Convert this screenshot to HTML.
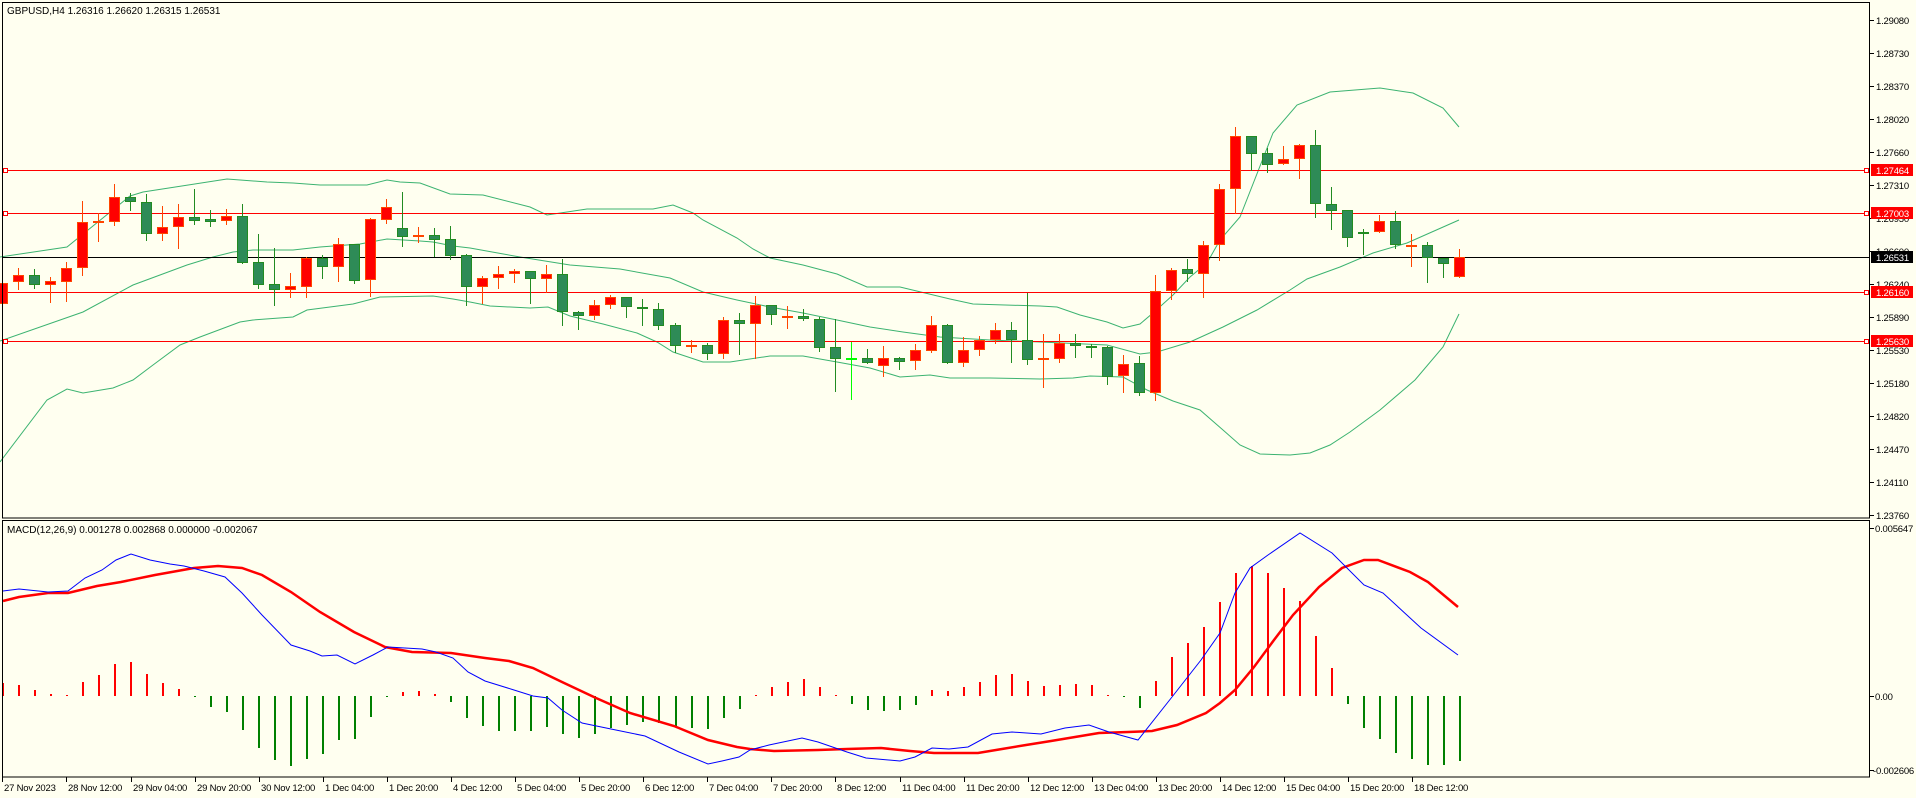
<!DOCTYPE html>
<html><head><meta charset="utf-8">
<style>
html,body{margin:0;padding:0;background:#fffff0;}
body{width:1916px;height:798px;overflow:hidden;position:relative;font-family:"Liberation Sans",sans-serif;}
svg{position:absolute;left:0;top:0;}
.t{font-family:"Liberation Sans",sans-serif;font-size:10px;fill:#000;}
.ax{font-family:"Liberation Sans",sans-serif;font-size:9.5px;fill:#000;letter-spacing:-0.2px;}
.lb{font-family:"Liberation Sans",sans-serif;font-size:9.5px;fill:#fff;letter-spacing:-0.2px;}
</style></head><body>
<svg id="s" width="1916" height="798" viewBox="0 0 1916 798" xmlns="http://www.w3.org/2000/svg" shape-rendering="crispEdges">
<rect x="0" y="0" width="1916" height="798" fill="#fffff0"/>
<g id="bands" fill="none" stroke="#3cb371" stroke-width="1" shape-rendering="auto"></g>
<g id="hl"></g>
<g id="candles"></g>
<g id="macd"></g>
<rect x="2.5" y="2.5" width="1867" height="515.5" fill="none" stroke="#000" stroke-width="1"/>
<rect x="2.5" y="520.5" width="1867" height="256.5" fill="none" stroke="#000" stroke-width="1"/>
<text class="t" x="7" y="14">GBPUSD,H4  1.26316 1.26620 1.26315 1.26531</text>
<text class="t" x="7" y="533">MACD(12,26,9) 0.001278 0.002868 0.000000 -0.002067</text>
<g id="axis"></g>
<g id="ytext">
<text class="ax" x="1876" y="24">1.29080</text>
<text class="ax" x="1876" y="57">1.28730</text>
<text class="ax" x="1876" y="90">1.28370</text>
<text class="ax" x="1876" y="123">1.28020</text>
<text class="ax" x="1876" y="156">1.27660</text>
<text class="ax" x="1876" y="189">1.27310</text>
<text class="ax" x="1876" y="222">1.26950</text>
<text class="ax" x="1876" y="255">1.26600</text>
<text class="ax" x="1876" y="288">1.26240</text>
<text class="ax" x="1876" y="321">1.25890</text>
<text class="ax" x="1876" y="354">1.25530</text>
<text class="ax" x="1876" y="387">1.25180</text>
<text class="ax" x="1876" y="420">1.24820</text>
<text class="ax" x="1876" y="453">1.24470</text>
<text class="ax" x="1876" y="486">1.24110</text>
<text class="ax" x="1876" y="519">1.23760</text>
<text class="ax" x="1875" y="532">0.005647</text>
<text class="ax" x="1875" y="700">0.00</text>
<text class="ax" x="1873" y="774">-0.002606</text>
</g>
<g id="lbls"></g>
<g id="dates"></g>
</svg>
<script>
var NS="http://www.w3.org/2000/svg";
function el(p,t,a,txt){var e=document.createElementNS(NS,t);for(var k in a)e.setAttribute(k,a[k]);if(txt!==undefined)e.textContent=txt;document.getElementById(p).appendChild(e);return e;}
function cx(i){return 1.67+16.02*i;}
var up=[[0,257],[67,247],[130,196],[143,192],[227,179],[267,182],[293,183],[320,185],[367,185],[387,180],[400,182],[420,183],[450,194],[483,195],[530,207],[547,215],[567,212],[587,209],[653,209],[673,205],[693,213],[703,220],[737,238],[753,249],[770,258],[803,265],[837,274],[867,287],[900,287],[950,299],[973,304],[1040,306],[1057,307],[1080,315],[1107,322],[1123,328],[1140,324],[1153,313],[1173,295],[1190,277],[1207,263],[1220,240],[1240,217],[1273,133],[1297,105],[1330,92],[1380,88],[1413,93],[1443,108],[1459,127]];
var mid=[[0,341],[83,312],[133,285],[187,265],[213,257],[233,252],[253,250],[293,250],[320,247],[360,244],[387,239],[420,241],[433,242],[453,246],[470,248],[520,257],[570,265],[620,269],[670,278],[703,292],[737,300],[770,307],[803,313],[837,320],[870,327],[903,332],[940,337],[990,340],[1040,342],[1107,345],[1140,354],[1157,352],[1190,342],[1223,327],[1257,310],[1290,290],[1307,279],[1340,267],[1373,253],[1407,243],[1459,220]];
var lo=[[0,462],[47,400],[67,389],[83,393],[113,388],[133,380],[153,365],[180,345],[200,337],[240,322],[253,320],[293,317],[307,310],[353,304],[380,297],[433,296],[453,299],[470,302],[490,306],[530,308],[548,307],[570,316],[603,324],[637,333],[657,342],[673,352],[703,362],[730,362],[770,356],[803,356],[837,362],[870,368],[900,377],[930,375],[950,378],[990,378],[1040,379],[1073,378],[1090,376],[1123,377],[1147,390],[1173,401],[1200,410],[1223,430],[1240,445],[1260,454],[1290,455],[1310,453],[1330,445],[1350,432],[1380,410],[1415,380],[1443,347],[1459,314]];
[up,mid,lo].forEach(function(a){el("bands","polyline",{points:a.map(function(p){return p.join(",")}).join(" ")});});
[[170,"#ff0000"],[213,"#ff0000"],[292,"#ff0000"],[341,"#ff0000"],[257,"#000000"]].forEach(function(h){
 el("hl","line",{x1:3,x2:1869,y1:h[0]+0.5,y2:h[0]+0.5,stroke:h[1],"stroke-width":1});
 if(h[1]=="#ff0000"){el("hl","rect",{x:3.5,y:h[0]-2+0.5,width:4,height:4,fill:"#fff",stroke:"#ff0000"});
 el("hl","rect",{x:1864.5,y:h[0]-2+0.5,width:4,height:4,fill:"#fff",stroke:"#ff0000"});}
});
var A=[[400,463,378,470,'R'],[376,397,354,416,'R'],[376,404,357,413,'G'],[394,404,381,455,'R'],[355,395,336,452,'R'],[217,355,153,374,'R'],[213,217,190,272,'R'],[142,217,102,224,'R'],[142,157,130,180,'G'],[157,251,132,269,'G'],[232,251,168,269,'R'],[202,232,162,293,'R'],[202,212,118,221,'G'],[208,215,180,228,'G'],[199,214,178,221,'R'],[199,338,162,338,'G'],[337,404,252,413,'G'],[403,419,295,464,'G'],[409,419,370,440,'R'],[324,412,320,440,'R'],[324,350,316,383,'G'],[283,352,264,392,'R'],[283,392,283,398,'G'],[208,391,204,437,'R'],[172,209,147,219,'R'],[235,260,126,287,'G'],[256,260,232,275,'R'],[256,269,234,318,'G'],[268,317,228,326,'G'],[316,412,313,464,'G']];
var B=[[295,322,288,370,'R'],[283,295,258,323,'R'],[273,283,267,307,'R'],[273,296,273,368,'G'],[283,296,255,335,'R'],[283,397,237,434,'G'],[397,409,393,448,'G'],[376,409,360,418,'R'],[352,376,346,383,'R'],[352,382,352,410,'G'],[381,388,357,434,'G'],[388,437,370,448,'G'],[436,499,430,515,'G'],[495,502,481,515,'R'],[495,523,490,538,'G'],[421,523,412,533,'R'],[421,431,400,523,'G'],[376,431,348,533,'R'],[376,406,376,431,'G'],[408,412,378,443,'R'],[408,418,387,421,'G'],[418,503,410,512,'G'],[502,536,418,632,'G'],[535,537,485,656,'L'],[535,550,507,550,'G'],[535,559,498,587,'R'],[535,547,532,566,'G'],[511,544,492,566,'R'],[436,512,408,515,'R'],[436,550,432,550,'G'],[511,550,471,557,'R'],[481,511,468,524,'R'],[451,481,429,488,'R'],[451,481,426,545,'G'],[481,541,338,553,'G'],[535,541,462,622,'R'],[490,538,462,545,'R'],[490,498,462,532,'G'],[498,502,492,530,'G'],[502,590,498,613,'G'],[552,589,525,637,'R'],[550,640,527,646,'G'],[334,640,286,661,'R']];
var C=[[571,634,563,656,'R'],[568,583,537,604,'G'],[496,583,483,650,'R'],[328,496,312,540,'R'],[169,328,141,400,'R'],[169,221,169,270,'G'],[220,254,204,275,'G'],[238,253,198,253,'R'],[196,238,192,293,'R'],[196,373,150,410,'G'],[373,392,321,446,'G'],[391,475,391,497,'G'],[455,458,447,522,'G'],[424,457,405,457,'R'],[424,496,393,503,'G'],[495,497,462,557,'R'],[496,535,486,605,'G'],[535,553,535,590,'G'],[532,592,507,592,'R']];
var all=[];A.forEach(function(c){all.push([c,150])});B.forEach(function(c){all.push([c,180])});C.forEach(function(c){all.push([c,80])});
all.forEach(function(it,i){
 var c=it[0],o=it[1],x=Math.round(cx(i));
 var bt=Math.round(o+c[0]/3),bb=Math.round(o+c[1]/3),wt=Math.round(o+c[2]/3),wb=Math.round(o+c[3]/3);
 var wc=c[4]=='R'?"#ff4500":(c[4]=='L'?"#00ff00":"#228b22");
 var fill=c[4]=='R'?"#ff0000":"#2e8b57";
 el("candles","line",{x1:x+0.5,x2:x+0.5,y1:wt,y2:wb+1,stroke:wc});
 if(bb-bt<=2||c[4]=='L'){el("candles","rect",{x:x-5,y:bt,width:11,height:Math.max(2,bb-bt),fill:wc});}
 else el("candles","rect",{x:x-4.5,y:bt+0.5,width:10,height:bb-bt-1,fill:fill,stroke:wc});
});
var H=[400,405,420,432,435,396,375,342,336,372,399,417,442,470,485,540,593,630,648,627,611,570,566,500,440,426,422,432,455,503,527,543,543,543,530,551,563,551,533,525,515,518,530,535,537,503,477,435,
410,396,387,410,435,462,480,483,480,465,420,423,410,396,375,372,393,408,405,402,405,435,442,473,393,321,279,231,156,69,48,69,114,153,258,354,462,533,566,608,626,644,644,632];
var z=696;
H.forEach(function(v,i){var y=Math.round(550+v/3);var x=Math.round(cx(i));
 var t=Math.min(y,z),h=Math.max(1,Math.abs(y-z));
 el("macd","rect",{x:x,y:t,width:2,height:h,fill:(y<z||i==47||i==69||i==4)?"#ff0000":"#008000"});});
var blue=[[3,591],[19,589],[48,592],[68,591],[85,578],[102,570],[116,560],[131,554],[150,560],[170,564],[184,566],[204,571],[225,577],[242,593],[262,615],[291,645],[310,651],[322,656],[337,655],[355,664],[373,655],[388,647],[422,649],[436,652],[453,658],[468,672],[485,681],[514,690],[533,696],[548,698],[562,710],[582,723],[611,729],[645,736],[679,752],[708,764],[722,761],[739,757],[750,750],[769,745],[802,738],[818,742],[847,752],[866,758],[900,761],[915,757],[932,748],[949,749],[968,747],[992,734],[1012,732],[1041,734],[1065,728],[1089,725],[1109,732],[1138,740],[1172,697],[1201,660],[1220,633],[1235,593],[1250,568],[1268,555],[1300,533],[1332,553],[1364,585],[1383,593],[1421,628],[1458,655]];
var redl=[[3,601],[19,597],[48,593],[68,593],[97,586],[121,582],[155,575],[194,568],[218,566],[242,568],[262,575],[291,592],[320,612],[354,632],[385,647],[412,652],[451,653],[485,658],[509,661],[533,668],[562,682],[596,698],[630,713],[674,726],[708,740],[737,747],[750,749],[774,751],[818,750],[847,749],[881,748],[910,751],[934,753],[978,753],[1002,749],[1026,745],[1051,741],[1075,737],[1099,733],[1128,732],[1152,731],[1177,725],[1206,713],[1220,703],[1235,690],[1254,667],[1274,640],[1293,615],[1319,587],[1342,568],[1364,560],[1378,560],[1410,572],[1428,582],[1458,607]];
el("macd","polyline",{points:redl.map(function(p){return p.join(",")}).join(" "),fill:"none",stroke:"#ff0000","stroke-width":2.5,"shape-rendering":"auto"});
el("macd","polyline",{points:blue.map(function(p){return p.join(",")}).join(" "),fill:"none",stroke:"#0000ff","stroke-width":1,"shape-rendering":"auto"});
[20,53,86,119,152,185,218,251,284,317,350,383,416,449,482,515].forEach(function(y){el("axis","line",{x1:1870,x2:1874,y1:y+0.5,y2:y+0.5,stroke:"#000"});});
[528,696,770].forEach(function(y){el("axis","line",{x1:1870,x2:1874,y1:y+0.5,y2:y+0.5,stroke:"#000"});});
[[170,"1.27464","#ff0000"],[213,"1.27003","#ff0000"],[257,"1.26531","#000000"],[292,"1.26160","#ff0000"],[341,"1.25630","#ff0000"]].forEach(function(l){
 el("lbls","rect",{x:1871,y:l[0]-6,width:42,height:12,fill:l[2]});
 el("lbls","text",{"class":"lb",x:1876,y:l[0]+4},l[1]);});
var D=["27 Nov 2023","28 Nov 12:00","29 Nov 04:00","29 Nov 20:00","30 Nov 12:00","1 Dec 04:00","1 Dec 20:00","4 Dec 12:00","5 Dec 04:00","5 Dec 20:00","6 Dec 12:00","7 Dec 04:00","7 Dec 20:00","8 Dec 12:00","11 Dec 04:00","11 Dec 20:00","12 Dec 12:00","13 Dec 04:00","13 Dec 20:00","14 Dec 12:00","15 Dec 04:00","15 Dec 20:00","18 Dec 12:00"];
D.forEach(function(d,i){var x=Math.round(2.4+64.08*i);el("dates","line",{x1:x+0.5,x2:x+0.5,y1:777,y2:782,stroke:"#000"});el("dates","text",{"class":"ax",x:x+2,y:791},d);});
</script>
</body></html>
